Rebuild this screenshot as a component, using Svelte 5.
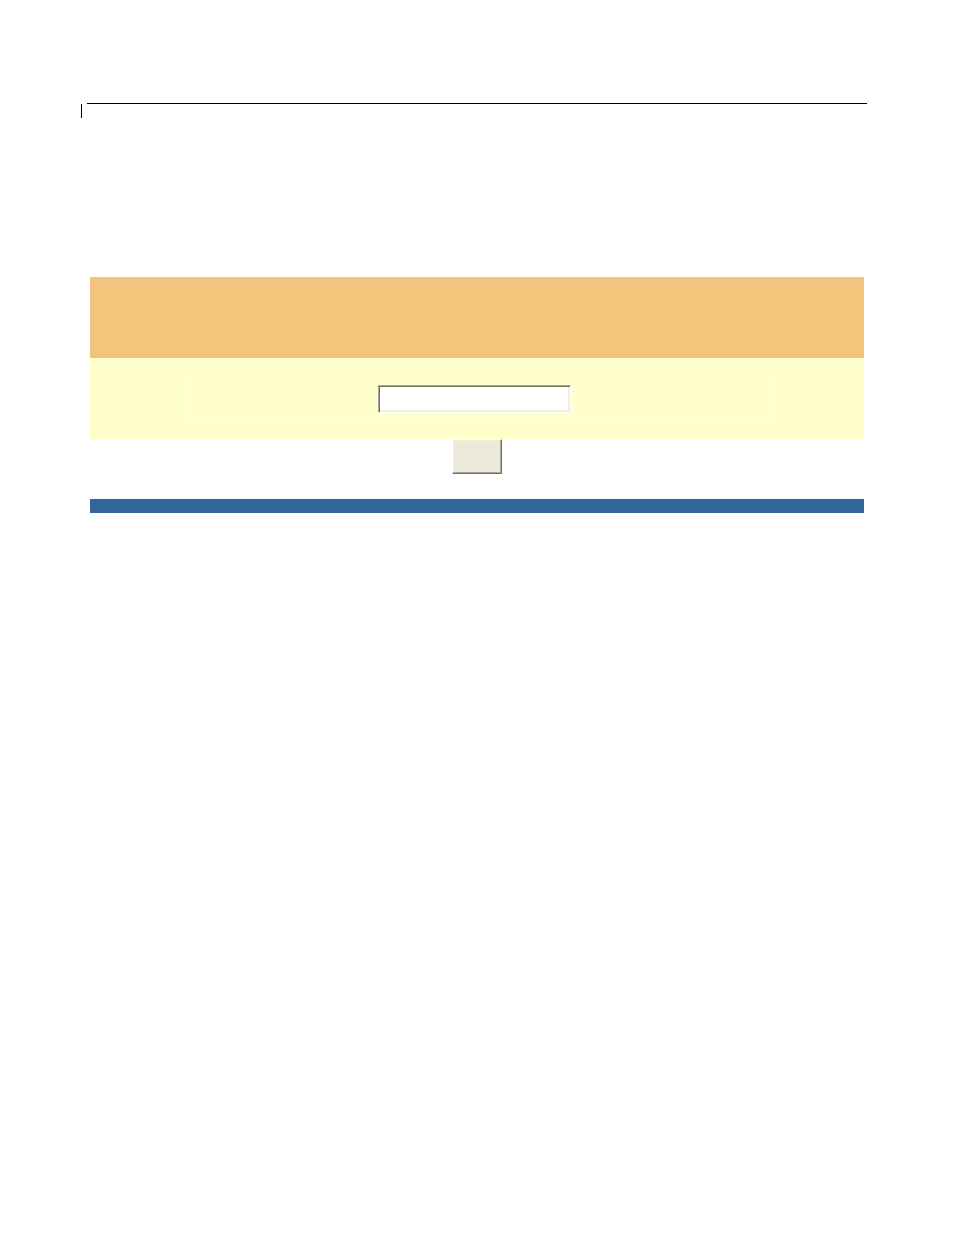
<script>
  let value = $state('');

  function submit(event) {
    event.preventDefault();
  }
</script>

<main>
  <header>
    <div class="mark"></div>
    <div class="rule"></div>
  </header>

  <form onsubmit={submit}>
    <div class="banner"></div>
    <div class="panel">
      <div class="group">
        <input type="text" aria-label="Value" bind:value />
      </div>
    </div>
    <div class="actions">
      <button type="submit" aria-label="Submit"></button>
    </div>
    <div class="footer"></div>
  </form>
</main>

<style>
  :global(body) {
    margin: 0;
    background: #ffffff;
    font-family: "Liberation Sans", Arial, sans-serif;
  }

  main {
    padding: 103px 87px 48px 81px;
  }

  header {
    display: flex;
    gap: 5px;
    margin-bottom: 159px;
  }

  .mark {
    width: 1px;
    height: 14px;
    margin-top: 1px;
    background: #000000;
  }

  .rule {
    flex: 1;
    height: 1px;
    background: #000000;
  }

  form {
    margin: 0 3px 0 9px;
  }

  .banner {
    height: 81px;
    background: #f3c47c;
  }

  .panel {
    padding: 21px 94px 19px;
    background: #ffffcc;
  }

  .group {
    display: flex;
    justify-content: center;
    padding: 6px 6px 6px 0;
    border: 1px solid #ffffda;
    border-top: 0;
  }

  input {
    box-sizing: border-box;
    width: 193px;
    height: 28px;
    margin: 0;
    padding: 0 6px;
    border: 1px solid;
    border-color: #aca899 #ffffff #ffffff #aca899;
    border-radius: 0;
    background: #ffffff;
    box-shadow:
      inset 1px 1px 0 #716f64,
      inset -2px -2px 0 #f1efe2;
    font: 16px "Liberation Sans", Arial, sans-serif;
    outline: none;
  }

  .actions {
    display: flex;
    justify-content: center;
    align-items: flex-start;
    padding-bottom: 25px;
  }

  button {
    box-sizing: border-box;
    width: 50px;
    height: 35px;
    padding: 0;
    border: 1px solid;
    border-color: #ffffff #716f64 #716f64 #ffffff;
    border-radius: 0;
    background: #ece9d8;
    box-shadow:
      inset -1px -1px 0 #aca899,
      inset 1px 1px 0 #f1efe2;
  }

  .footer {
    height: 14px;
    background: #336699;
  }
</style>
